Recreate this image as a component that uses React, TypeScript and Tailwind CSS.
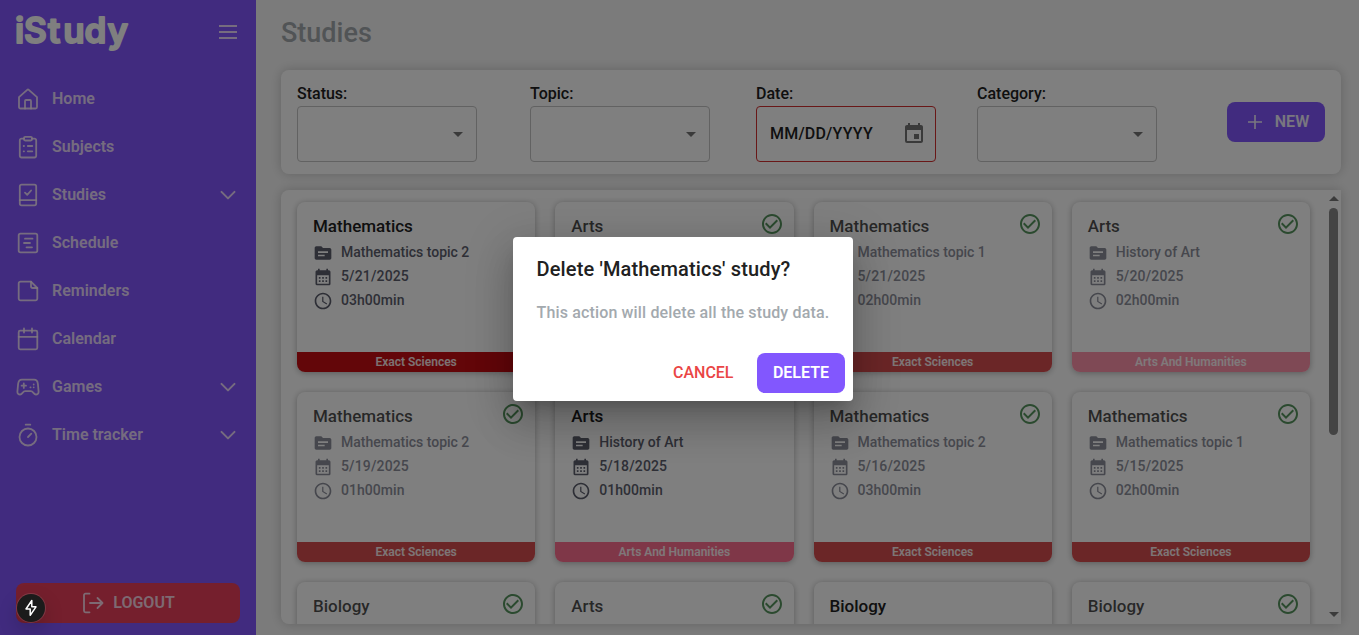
import type { ReactNode } from "react";
import { MdTopic, MdCalendarMonth, MdAccessTime, MdEvent, MdArrowDropDown, MdCheckCircleOutline } from "react-icons/md";

type Study = { title: string; topic?: string; date?: string; time?: string; category?: string; color: string; done: boolean };

const EX = "Exact Sciences";
const AH = "Arts And Humanities";
const RED = "bg-[#c60c12]";
const RED_DONE = "bg-[#d64d4f]";
const PINK = "bg-[#ff6f91]";
const PINK_DONE = "bg-[#ff92ab]";

const studies: Study[] = [
  { title: "Mathematics", topic: "Mathematics topic 2", date: "5/21/2025", time: "03h00min", category: EX, color: RED, done: false },
  { title: "Arts", color: PINK_DONE, done: true },
  { title: "Mathematics", topic: "Mathematics topic 1", date: "5/21/2025", time: "02h00min", category: EX, color: RED_DONE, done: true },
  { title: "Arts", topic: "History of Art", date: "5/20/2025", time: "02h00min", category: AH, color: PINK_DONE, done: true },
  { title: "Mathematics", topic: "Mathematics topic 2", date: "5/19/2025", time: "01h00min", category: EX, color: RED_DONE, done: true },
  { title: "Arts", topic: "History of Art", date: "5/18/2025", time: "01h00min", category: AH, color: PINK, done: false },
  { title: "Mathematics", topic: "Mathematics topic 2", date: "5/16/2025", time: "03h00min", category: EX, color: RED_DONE, done: true },
  { title: "Mathematics", topic: "Mathematics topic 1", date: "5/15/2025", time: "02h00min", category: EX, color: RED_DONE, done: true },
  { title: "Biology", color: RED_DONE, done: true },
  { title: "Arts", color: PINK_DONE, done: true },
  { title: "Biology", color: RED, done: false },
  { title: "Biology", color: RED_DONE, done: true },
];

const icons: Record<string, ReactNode> = {
  Home: (<><path d="M3 10.2 11.2 2.9a1.2 1.2 0 0 1 1.6 0L21 10.2V20a1.5 1.5 0 0 1-1.5 1.5h-15A1.5 1.5 0 0 1 3 20Z" /><path d="M9 21.5V14a1 1 0 0 1 1-1h4a1 1 0 0 1 1 1v7.5" /></>),
  Subjects: (<><path d="M8 3.7H5.5A1.7 1.7 0 0 0 3.8 5.4v15.4a1.7 1.7 0 0 0 1.7 1.7h13a1.7 1.7 0 0 0 1.7-1.7V5.4a1.7 1.7 0 0 0-1.7-1.7H16" /><rect x="8" y="1.8" width="8" height="3.7" rx="1.2" /><path d="M7.7 11h.3M7.7 16.3h.3M11.8 11h4.5M11.8 16.3h4.5" /></>),
  Studies: (<><rect x="3.8" y="1.7" width="16.4" height="20.6" rx="1.8" /><path d="M3.8 17.2h16.4M9 9.7l2.2 2.1 3.9-4.3" /></>),
  Schedule: (<><rect x="2.7" y="2.7" width="18.6" height="18.6" rx="1.8" /><path d="M9 7.7h7.5M8 12h6M10.5 16.3H16" /></>),
  Reminders: (<><path d="M15 2.7H4.5a1.8 1.8 0 0 0-1.8 1.8v15a1.8 1.8 0 0 0 1.8 1.8h15a1.8 1.8 0 0 0 1.8-1.8V9Z" /><path d="M15 2.7v4.5A1.8 1.8 0 0 0 16.8 9h4.5" /></>),
  Calendar: (<><rect x="2.7" y="3.7" width="18.6" height="18.6" rx="1.5" /><path d="M2.7 9.8h18.6M8 1.5v4M16 1.5v4" /></>),
  Games: (<><path d="M6 4.7h12c2.6 0 3.6 1.5 3.9 4.3l.7 7.5c.2 2.3-1.3 3-2.7 3-2.3 0-2.6-3.3-5.1-3.3H9.2c-2.5 0-2.8 3.3-5.1 3.3-1.4 0-2.9-.7-2.7-3L2.1 9c.3-2.8 1.3-4.3 3.9-4.3Z" /><path d="M7.8 8.5v4.4M5.6 10.7H10M14.4 12.3h.2M17.7 9.5h.01M17.7 12.3h.01" /></>),
  "Time tracker": (<><circle cx="12" cy="14" r="8.5" /><path d="M12 14l3.3-3.3M9.7 1.7h4.6" /></>),
};

const nav = [["Home"], ["Subjects"], ["Studies", "v"], ["Schedule"], ["Reminders"], ["Calendar"], ["Games", "v"], ["Time tracker", "v"]];

function Sidebar() {
  return (
    <aside className="flex h-full w-64 shrink-0 flex-col bg-[#8257fe] px-4 pb-3 text-[#fff0ff]/85">
      <div className="flex h-[75px] items-start justify-between pt-[11px]">
        <svg width="116" height="42" viewBox="0 0 116 42" className="overflow-visible text-white">
          <text x="-1 8 32 47.2 68.5 91.5" y="31.5" fill="currentColor" stroke="currentColor" strokeWidth="1.8" strokeLinejoin="round" className="font-['Inter'] text-[35px] font-semibold">iStudy</text>
        </svg>
        <svg width="24" height="24" viewBox="0 0 24 24" className="mt-[9px]" fill="none" stroke="currentColor" strokeWidth="2"><path d="M3 6h18M3 12h18M3 18h18" /></svg>
      </div>
      <nav className="flex flex-col">
        {nav.map(([name, arrow]) => (
          <div key={name} className="flex h-12 items-center">
            <svg width="24" height="24" viewBox="0 0 24 24" fill="none" stroke="currentColor" strokeWidth="1.8" strokeLinecap="round" strokeLinejoin="round">{icons[name]}</svg>
            <span className="ml-3 flex-1 text-base font-semibold">{name}</span>
            {arrow && <svg width="24" height="24" viewBox="0 0 24 24" fill="none" stroke="currentColor" strokeWidth="2" strokeLinecap="round" strokeLinejoin="round"><path d="m5.5 8.9 6.5 6.5 6.5-6.5" /></svg>}
          </div>
        ))}
      </nav>
      <div className="mt-auto flex h-10 w-full items-center justify-center gap-2 rounded-lg bg-[#ea3f5b] text-base font-semibold">
        <svg width="24" height="24" viewBox="0 0 24 24" fill="none" stroke="currentColor" strokeWidth="1.8" strokeLinecap="round" strokeLinejoin="round"><path d="M8.5 2.7H4.5A1.5 1.5 0 0 0 3 4.2v15.6a1.5 1.5 0 0 0 1.5 1.5h4M9 12h12.5M16.5 7l5 5-5 5" /></svg>
        LOGOUT
      </div>
    </aside>
  );
}

function SelectField({ label }: { label: string }) {
  return (
    <div className="w-[180px]">
      <div className="text-base leading-6">{label}</div>
      <div className="flex h-14 items-center justify-end rounded border border-[#c4c4c4] pr-1.5 text-[#757575]"><MdArrowDropDown size={24} /></div>
    </div>
  );
}

function Card({ s }: { s: Study }) {
  return (
    <div className={s.done ? "flex h-[170px] flex-col overflow-hidden rounded-lg bg-white text-black/70 shadow-[0_1px_6px_rgba(0,0,0,0.3)]" : "flex h-[170px] flex-col overflow-hidden rounded-lg bg-white text-[#212121] shadow-[0_1px_6px_rgba(0,0,0,0.3)]"}>
      <div className="flex h-[38px] shrink-0 items-start justify-between pl-4 pr-2.5 pt-[11px]">
        <span className="pt-px text-[17px] leading-6">{s.title}</span>
        {s.done && <MdCheckCircleOutline size={24} className="-mt-px text-[#57945f]" />}
      </div>
      <div className={s.done ? "flex flex-1 flex-col pl-4 text-sm text-[#8d8f9b]" : "flex flex-1 flex-col pl-4 text-sm text-[#5c5e6d]"}>
        {s.topic && <div className="flex h-6 items-center gap-2"><MdTopic size={20} className="mt-0.5" /><span>{s.topic}</span></div>}
        {s.date && <div className="flex h-6 items-center gap-2 tracking-[0.15px]"><MdCalendarMonth size={20} className="mt-0.5" /><span>{s.date}</span></div>}
        {s.time && <div className="flex h-6 items-center gap-2 tracking-[0.05px]"><MdAccessTime size={20} className="mt-0.5" /><span>{s.time}</span></div>}
      </div>
      <div className={s.color + " h-5 text-center text-xs font-semibold leading-5 text-white/90"}>{s.category}</div>
    </div>
  );
}

export default function App() {
  return (
    <div className="relative flex h-[635px] w-[1359px] overflow-hidden bg-[#f7f7f7] font-['Roboto',sans-serif] font-medium text-[#212121]">
      <Sidebar />
      <main className="flex min-w-0 flex-1 flex-col pb-[11px] pl-[25px] pr-[18px]">
        <h1 className="flex h-[70px] items-center pb-1 text-[27px] font-medium text-[#a3a8ac]">Studies</h1>
        <section className="flex h-[104px] shrink-0 rounded-lg bg-white pl-4 pr-4 pt-3 shadow-[0_0_12px_rgba(0,0,0,0.2)]">
          <SelectField label="Status:" />
          <div className="ml-[53px]"><SelectField label="Topic:" /></div>
          <div className="ml-[46px] w-[180px]">
            <div className="text-base leading-6">Date:</div>
            <div className="flex h-14 items-center justify-between rounded border border-[#d32f2f] pl-[13px] pr-[9px] text-base tracking-[0.2px]">MM/DD/YYYY<MdEvent size={24} className="text-[#757575]" /></div>
          </div>
          <div className="ml-[41px]"><SelectField label="Category:" /></div>
          <button className="ml-auto mt-5 flex h-10 w-[98px] items-center justify-center gap-2 rounded-lg bg-[#8257fe] text-base font-semibold text-white/90">
            <svg width="24" height="24" viewBox="0 0 24 24" fill="none" stroke="currentColor" strokeWidth="1.6"><path d="M12 5v14M5 12h14" /></svg>NEW
          </button>
        </section>
        <section className="mt-4 flex min-h-0 flex-1 rounded-l-lg bg-white shadow-[0_0_12px_rgba(0,0,0,0.2)]">
          <div className="grid min-w-0 flex-1 auto-rows-[170px] grid-cols-4 gap-5 overflow-hidden rounded-l-lg pl-4 pr-4 pt-3">
            {studies.map((s, i) => <Card key={i} s={s} />)}
          </div>
          <div className="flex w-[15px] flex-col items-center justify-between pb-[7px] pt-1.5 text-[#777]">
            <svg width="10" height="5" viewBox="0 0 10 5"><path d="M0 5 5 0l5 5Z" fill="currentColor" /></svg>
            <div className="mb-auto mt-[7px] h-[227px] w-[9px] rounded-full bg-[#888]" />
            <svg width="10" height="5" viewBox="0 0 10 5"><path d="M0 0h10L5 5Z" fill="currentColor" /></svg>
          </div>
        </section>
      </main>

      <div className="absolute inset-0 flex items-center justify-center bg-black/50 pl-[7px] pt-[3px]">
        <div className="flex h-[164px] w-[340px] flex-col rounded bg-white shadow-[0_11px_15px_-7px_rgba(0,0,0,0.2),0_24px_38px_3px_rgba(0,0,0,0.14),0_9px_46px_8px_rgba(0,0,0,0.12)]">
          <h2 className="pl-[23.5px] pt-4 text-xl leading-8 tracking-[0.15px]">Delete 'Mathematics' study?</h2>
          <p className="whitespace-nowrap pl-[23.5px] pt-4 text-base leading-6 tracking-[0.15px] text-[#a3a9ae]">This action will delete all the study data.</p>
          <div className="mt-auto flex justify-end gap-2 p-2 text-base">
            <button className="h-10 pl-4 pr-[15.5px] font-medium text-[#ea4545]">CANCEL</button>
            <button className="h-10 w-[88px] rounded-lg bg-[#8257fe] font-semibold text-white">DELETE</button>
          </div>
        </div>
      </div>
      <div className="absolute left-[17px] top-[594px] flex size-7 items-center justify-center rounded-full bg-[#1b1b1b] shadow-[0_0_0_1px_rgba(255,255,255,0.12),0_8px_20px_rgba(0,0,0,0.2)]">
        <svg width="16" height="18" viewBox="0 0 16 18" fill="none" stroke="white" strokeWidth="1.5" strokeLinejoin="round"><path d="M8.8 1.5 3 10h4.2v6.3L13 7.8H8.8Z" /></svg>
      </div>
    </div>
  );
}
